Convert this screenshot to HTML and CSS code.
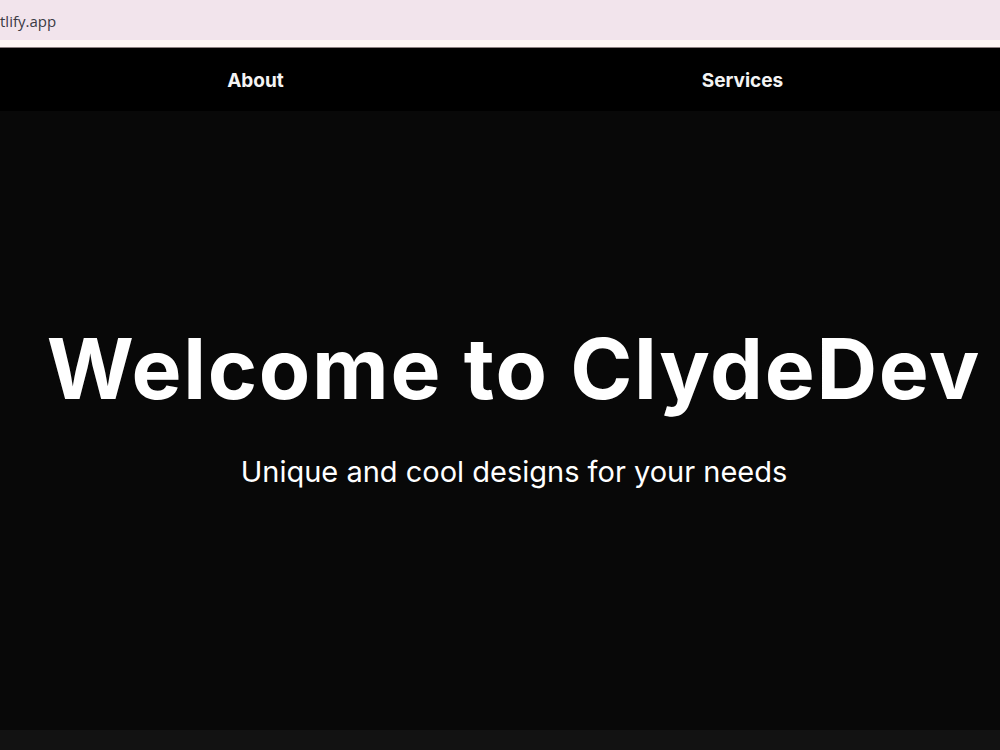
FILE: index.html
```html
<!DOCTYPE html>
<html lang="en">
  <head>
    <meta charset="UTF-8" />
    <meta name="viewport" content="width=device-width, initial-scale=1.0" />
    <title>ClydeDev</title>
    <link rel="stylesheet" href="styles.css">
  </head>
  <body>
    <div class="address-bar">
      <span class="url">tlify.app</span>
    </div>
    <div class="toolbar-strip"></div>
    <nav class="nav">
      <a href="#about">About</a>
      <a href="#services">Services</a>
    </nav>
    <section class="hero">
      <h1>Welcome to ClydeDev</h1>
      <p>Unique and cool designs for your needs</p>
    </section>
    <div class="footer-strip"></div>
  </body>
</html>
```

FILE: styles.css
```css
* {
  box-sizing: border-box;
}
body {
  margin: 0;
  font-family: Inter, "Open Sans", sans-serif;
  background: #080808;
  height: 750px;
  overflow: hidden;
  display: flex;
  flex-direction: column;
}
.address-bar {
  height: 40px;
  background: #f2e4ec;
  display: flex;
  align-items: center;
}
.url {
  font-family: "Open Sans", sans-serif;
  font-size: 15px;
  color: #3a3a44;
  margin-top: 2px;
}
.toolbar-strip {
  height: 8px;
  background: #fdf6f4;
  border-bottom: 1px solid #8a7e80;
}
.nav {
  height: 63px;
  background: #000;
  display: grid;
  grid-template-columns: 1fr 1fr;
  align-items: center;
  text-align: center;
  padding: 0 14px 0 12px;
}
.nav a {
  color: #f4f4f4;
  text-decoration: none;
  font-weight: 700;
  font-size: 19px;
  margin-top: 1px;
}
.hero {
  flex: 1;
  color: #fff;
  text-align: center;
  padding: 208px 0 0 28px;
}
.hero h1 {
  margin: 0;
  font-size: 84px;
  font-weight: 700;
  line-height: 100px;
  letter-spacing: 1.7px;
}
.hero p {
  margin: 36px 0 0;
  font-size: 29px;
  font-weight: 400;
  line-height: 34px;
}
.footer-strip {
  height: 20px;
  background: #121212;
}
```
